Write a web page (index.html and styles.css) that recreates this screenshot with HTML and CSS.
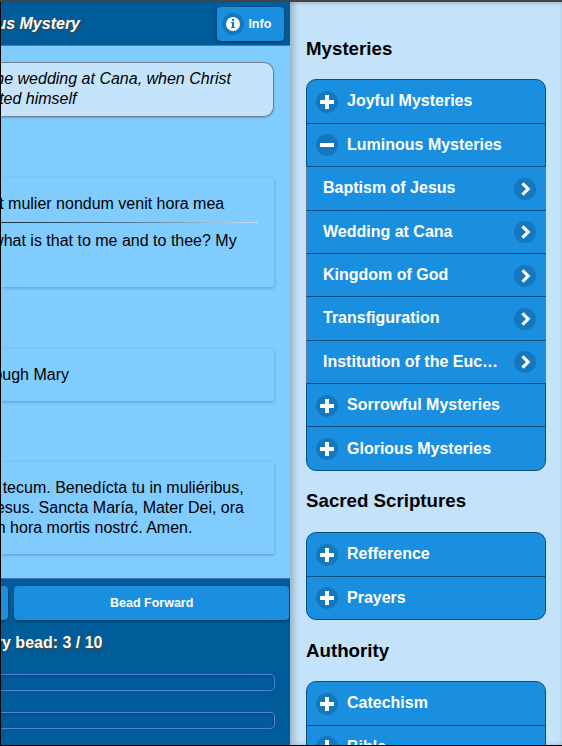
FILE: index.html
```html
<!DOCTYPE html>
<html lang="en">
<head>
<meta charset="utf-8">
<title>Luminous Mystery</title>
<link rel="stylesheet" href="styles.css">
</head>
<body>
<svg class="defs" width="0" height="0" aria-hidden="true">
  <symbol id="plus" viewBox="0 0 14 14"><path fill="#fff" d="M14 5H9V0H5v5H0v4h5v5h4V9h5z"/></symbol>
  <symbol id="minus" viewBox="0 0 14 14"><path fill="#fff" d="M0 5h14v4H0z"/></symbol>
  <symbol id="arrow" viewBox="0 0 14 14"><path fill="#fff" d="M5.6.2 3.4 2.4 8 7l-4.6 4.6 2.2 2.2L12.4 7z"/></symbol>
  <symbol id="info" viewBox="0 0 14 14"><path fill="#fff" fill-rule="evenodd" d="M7 0a7 7 0 1 0 0 14A7 7 0 0 0 7 0zM6 2h2v2H6zM5 5h3v5h1v1H5v-1h1V6H5z"/></symbol>
</svg>
<div class="app">
  <main class="page">
    <header class="bar">
      <h1 class="title clip">us Mystery</h1>
      <a class="btn info"><span class="disc"><svg><use href="#info"/></svg></span>Info</a>
    </header>
    <section class="content">
      <div class="note">
        <p class="clip end-christ">he wedding at Cana, when Christ</p>
        <p class="clip end-himself">ted himself</p>
      </div>
      <article class="card first">
        <p class="clip end-mea">t mulier nondum venit hora mea</p>
        <hr>
        <p class="clip end-my">what is that to me and to thee? My</p>
        <p class="blank"></p>
      </article>
      <article class="card second">
        <p class="clip end-mary">ough Mary</p>
      </article>
      <article class="card third">
        <p class="clip end-mul">tecum. Benedícta tu in muliéribus,</p>
        <p class="clip end-ora">esus. Sancta María, Mater Dei, ora</p>
        <p class="clip end-amen">n hora mortis nostrć. Amen.</p>
      </article>
    </section>
    <footer class="foot">
      <div class="controls"><a class="btn back"></a><a class="btn forward">Bead Forward</a></div>
      <h2 class="count clip">ry bead: 3 / 10</h2>
      <div class="track"></div>
      <div class="track"></div>
    </footer>
  </main>
  <aside class="panel">
    <h3>Mysteries</h3>
    <ul class="set">
      <li><span class="disc"><svg><use href="#plus"/></svg></span>Joyful Mysteries</li>
      <li><span class="disc"><svg><use href="#minus"/></svg></span>Luminous Mysteries</li>
      <li class="sub"><span class="label">Baptism of Jesus</span><span class="disc"><svg><use href="#arrow"/></svg></span></li>
      <li class="sub"><span class="label">Wedding at Cana</span><span class="disc"><svg><use href="#arrow"/></svg></span></li>
      <li class="sub"><span class="label">Kingdom of God</span><span class="disc"><svg><use href="#arrow"/></svg></span></li>
      <li class="sub"><span class="label">Transfiguration</span><span class="disc"><svg><use href="#arrow"/></svg></span></li>
      <li class="sub"><span class="label">Institution of the Eucharist</span><span class="disc"><svg><use href="#arrow"/></svg></span></li>
      <li><span class="disc"><svg><use href="#plus"/></svg></span>Sorrowful Mysteries</li>
      <li><span class="disc"><svg><use href="#plus"/></svg></span>Glorious Mysteries</li>
    </ul>
    <h3>Sacred Scriptures</h3>
    <ul class="set">
      <li><span class="disc"><svg><use href="#plus"/></svg></span>Refference</li>
      <li><span class="disc"><svg><use href="#plus"/></svg></span>Prayers</li>
    </ul>
    <h3>Authority</h3>
    <ul class="set">
      <li><span class="disc"><svg><use href="#plus"/></svg></span>Catechism</li>
      <li><span class="disc"><svg><use href="#plus"/></svg></span>Bible</li>
    </ul>
  </aside>
</div>
</body>
</html>
```
FILE: styles.css
```css
* { box-sizing: border-box; }
body {
  margin: 0;
  height: 746px;
  overflow: hidden;
  font: 16px/20px "Liberation Sans", Arial, sans-serif;
  color: #000;
}
h1, h2, h3, p, ul { margin: 0; padding: 0; }
.defs { display: block; }
.app {
  display: flex;
  height: 746px;
  border-top: 2px solid #444;
  border-bottom: 1px solid #000;
  overflow: hidden;
}
.page {
  width: 290px;
  flex: none;
  display: flex;
  flex-direction: column;
  border-left: 1px solid #000;
  background: #80ccff;
  overflow: hidden;
}
/* Lines run past the left edge and end at a fixed width. */
.clip { display: flex; justify-content: flex-end; white-space: nowrap; }

.bar {
  height: 44px;
  flex: none;
  display: flex;
  justify-content: space-between;
  padding: 5px 6px 0 0;
  background: #005c99;
  border-bottom: 1px solid #3d7cc0;
}
.title {
  width: 79px;
  height: 34px;
  align-items: center;
  font-size: 16px;
  font-style: italic;
  color: #fff;
  text-shadow: 0 1px 0 #444, 1px 1px 1px #444;
}
.btn {
  display: flex;
  align-items: center;
  justify-content: center;
  height: 34px;
  border-radius: 4px;
  background: #1a8fe0;
  box-shadow: 0 1px 3px rgba(0, 0, 0, .5);
  color: #fff;
  font-size: 12.5px;
  font-weight: bold;
}
.info { width: 67px; justify-content: flex-start; padding-left: 5px; gap: 4.4px; }
.disc {
  flex: none;
  display: flex;
  align-items: center;
  justify-content: center;
  width: 22px;
  height: 22px;
  border-radius: 50%;
  background: #1678bc;
}
.disc svg { width: 14px; height: 14px; }

.content { height: 532px; flex: none; padding-top: 16px; }
.note {
  width: 273px;
  height: 55px;
  padding-top: 6px;
  border: 1px solid #6f7f8c;
  border-left: 0;
  border-radius: 0 10px 10px 0;
  background: #c5e4fb;
  box-shadow: 0 1px 2px rgba(0, 0, 0, .2);
  font-style: italic;
}
.card {
  width: 273px;
  padding: 16px 0;
  box-shadow: 0 1px 3px rgba(0, 0, 0, .25);
}
.first { height: 109px; margin-top: 61px; }
.second { height: 52px; margin-top: 62px; }
.third { height: 92px; margin-top: 61px; }
.card hr {
  width: 257px;
  height: 1px;
  margin: 8px 0;
  border: 0;
  background: linear-gradient(to right, #1d2f3b, #4f7890 50%, #c5e4fb);
}
.blank { height: 20px; }
.end-christ { width: 230px; }
.end-himself { width: 75.5px; }
.end-mea { width: 223.2px; }
.end-my { width: 235.7px; }
.end-mary { width: 68px; }
.end-mul { width: 242.7px; }
.end-ora { width: 243px; }
.end-amen { width: 191.4px; }

.foot {
  flex: 1;
  border-top: 1px solid #3d72c4;
  background: #005c99;
}
.controls { display: flex; gap: 6px; padding-top: 7px; }
.back { width: 7px; border-radius: 0 4px 4px 0; }
.forward { width: 275.4px; flex: none; }
.count {
  width: 101.5px;
  margin: 13px 0 21px;
  font-size: 16px;
  color: #fff;
  text-shadow: 0 1px 0 #444, 1px 1px 1px #444;
}
.track {
  width: 274px;
  height: 17px;
  margin-bottom: 21px;
  border: 1px solid #5580dc;
  border-left: 0;
  border-radius: 0 5px 5px 0;
  box-shadow: inset 0 1px 3px rgba(0, 0, 0, .25);
}

.panel {
  width: 272px;
  flex: none;
  padding: 36.7px 16px 0;
  background: #c4e3fa;
  box-shadow: inset 5px 0 5px rgba(0, 0, 0, .15), inset 0 1px 4px rgba(0, 0, 0, .12);
}
.panel h3 { font-size: 18.72px; line-height: 20px; margin-bottom: 20.7px; }
.set {
  list-style: none;
  width: 240px;
  margin-bottom: 20.7px;
  border-radius: 10px;
  border: 1px solid #0b4f7e;
  background: #1a8fe0;
}
.set li {
  display: flex;
  align-items: center;
  gap: 9px;
  height: 43.375px;
  padding: 0 16px 0 9px;
  border-top: 1px solid #0b4f7e;
  color: #fff;
  font-weight: bold;
  white-space: nowrap;
}
.set li:first-child { border-top: 0; height: 42.375px; padding-bottom: 1px; }
.set .disc { margin-top: 1px; }
.set li:first-child .disc { margin-top: 2px; }
.set .sub {
  margin: 0 -1px;
  padding: 0 9px 0 16px;
  border-left: 1px solid #66798a;
  border-right: 1px solid #66798a;
}
.sub .label { flex: none; width: 176px; overflow: hidden; text-overflow: ellipsis; }
.sub .disc { margin-left: auto; }
```
